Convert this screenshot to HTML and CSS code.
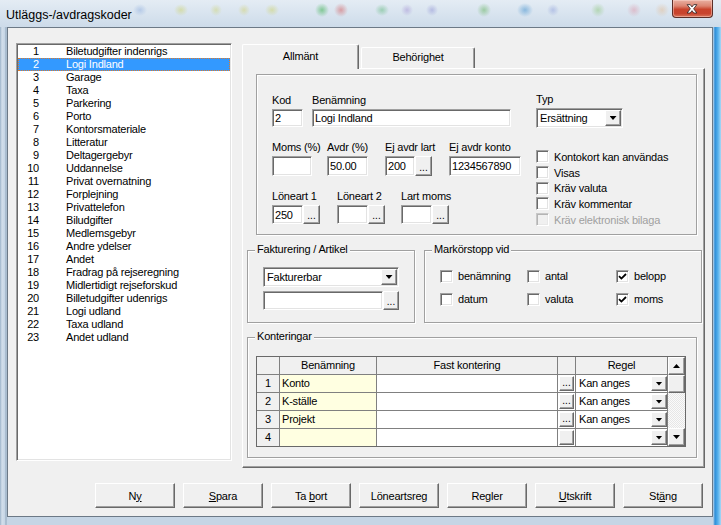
FILE: index.html
```html
<!DOCTYPE html>
<html lang="sv">
<head>
<meta charset="utf-8">
<title>Utläggs-/avdragskoder</title>
<link rel="stylesheet" href="styles.css">
</head>
<body>
<div class="window">
  <div class="titlebar">
    <span class="title">Utläggs-/avdragskoder</span>
    <div class="close">
      <svg width="41" height="18" viewBox="0 0 41 18">
        <path d="M15.5 4.5h3.2l1.8 2.4 1.8-2.4h3.2l-3.3 4.3 3.3 4.3h-3.2l-1.8-2.4-1.8 2.4h-3.2l3.3-4.3z" fill="#fff" stroke="#3a2a2a" stroke-width="0.9" stroke-linejoin="round"/>
      </svg>
    </div>
  </div>
  <div class="client">
    <div class="main">
      <div class="listbox">
        <div class="item"><span class="num">1</span><span class="name">Biletudgifter indenrigs</span></div>
        <div class="item sel"><span class="num">2</span><span class="name">Logi Indland</span></div>
        <div class="item"><span class="num">3</span><span class="name">Garage</span></div>
        <div class="item"><span class="num">4</span><span class="name">Taxa</span></div>
        <div class="item"><span class="num">5</span><span class="name">Parkering</span></div>
        <div class="item"><span class="num">6</span><span class="name">Porto</span></div>
        <div class="item"><span class="num">7</span><span class="name">Kontorsmateriale</span></div>
        <div class="item"><span class="num">8</span><span class="name">Litteratur</span></div>
        <div class="item"><span class="num">9</span><span class="name">Deltagergebyr</span></div>
        <div class="item"><span class="num">10</span><span class="name">Uddannelse</span></div>
        <div class="item"><span class="num">11</span><span class="name">Privat overnatning</span></div>
        <div class="item"><span class="num">12</span><span class="name">Forplejning</span></div>
        <div class="item"><span class="num">13</span><span class="name">Privattelefon</span></div>
        <div class="item"><span class="num">14</span><span class="name">Biludgifter</span></div>
        <div class="item"><span class="num">15</span><span class="name">Medlemsgebyr</span></div>
        <div class="item"><span class="num">16</span><span class="name">Andre ydelser</span></div>
        <div class="item"><span class="num">17</span><span class="name">Andet</span></div>
        <div class="item"><span class="num">18</span><span class="name">Fradrag på rejseregning</span></div>
        <div class="item"><span class="num">19</span><span class="name">Midlertidigt rejseforskud</span></div>
        <div class="item"><span class="num">20</span><span class="name">Billetudgifter udenrigs</span></div>
        <div class="item"><span class="num">21</span><span class="name">Logi udland</span></div>
        <div class="item"><span class="num">22</span><span class="name">Taxa udland</span></div>
        <div class="item"><span class="num">23</span><span class="name">Andet udland</span></div>
      </div>

      <div class="tabs">
        <div class="tabstrip">
          <div class="tab active">Allmänt</div>
          <div class="tab">Behörighet</div>
        </div>
        <div class="panel">
          <div class="top-frame">
            <div class="left-col">
              <div class="row r1">
                <div class="field w-kod"><span class="lbl">Kod</span><div class="input">2</div></div>
                <div class="field w-ben"><span class="lbl">Benämning</span><div class="input">Logi Indland</div></div>
              </div>
              <div class="row r2">
                <div class="field w-moms"><span class="lbl">Moms (%)</span><div class="input"></div></div>
                <div class="field w-avdr"><span class="lbl">Avdr (%)</span><div class="input">50.00</div></div>
                <div class="field w-lart"><span class="lbl">Ej avdr lart</span><div class="combo"><div class="input ci30">200</div><div class="dots">...</div></div></div>
                <div class="field w-konto"><span class="lbl">Ej avdr konto</span><div class="input">1234567890</div></div>
              </div>
              <div class="row r3">
                <div class="field w-lon1"><span class="lbl">Löneart 1</span><div class="combo"><div class="input ci31">250</div><div class="dots">...</div></div></div>
                <div class="field w-lon2"><span class="lbl">Löneart 2</span><div class="combo"><div class="input ci31"></div><div class="dots">...</div></div></div>
                <div class="field w-lart2"><span class="lbl">Lart moms</span><div class="combo"><div class="input ci31"></div><div class="dots">...</div></div></div>
              </div>
            </div>
            <div class="right-col">
              <span class="lbl">Typ</span>
              <div class="select typ"><span class="val">Ersättning</span><span class="drop"><span class="tri"></span></span></div>
              <div class="cblist">
                <div class="cb"><span class="box"></span><span>Kontokort kan användas</span></div>
                <div class="cb"><span class="box"></span><span>Visas</span></div>
                <div class="cb"><span class="box"></span><span>Kräv valuta</span></div>
                <div class="cb"><span class="box"></span><span>Kräv kommentar</span></div>
                <div class="cb disabled"><span class="box"></span><span>Kräv elektronisk bilaga</span></div>
              </div>
            </div>
          </div>

          <div class="mid-row">
            <div class="group fakt">
              <span class="legend">Fakturering / Artikel</span>
              <div class="select fsel"><span class="val">Fakturerbar</span><span class="drop"><span class="tri"></span></span></div>
              <div class="combo frow"><div class="input ci120"></div><div class="dots d16">...</div></div>
            </div>
            <div class="group mark">
              <span class="legend">Markörstopp vid</span>
              <div class="markgrid">
                <div class="cb"><span class="box"></span><span>benämning</span></div>
                <div class="cb"><span class="box"></span><span>antal</span></div>
                <div class="cb"><span class="box"><svg width="9" height="9" viewBox="0 0 9 9"><path d="M1 4.2 L3.4 6.6 L8 2" fill="none" stroke="#000" stroke-width="1.8"/></svg></span><span>belopp</span></div>
                <div class="cb"><span class="box"></span><span>datum</span></div>
                <div class="cb"><span class="box"></span><span>valuta</span></div>
                <div class="cb"><span class="box"><svg width="9" height="9" viewBox="0 0 9 9"><path d="M1 4.2 L3.4 6.6 L8 2" fill="none" stroke="#000" stroke-width="1.8"/></svg></span><span>moms</span></div>
              </div>
            </div>
          </div>

          <div class="group kont">
            <span class="legend">Konteringar</span>
            <div class="kgrid">
              <div class="hd"></div>
              <div class="hd">Benämning</div>
              <div class="hd">Fast kontering</div>
              <div class="hd"></div>
              <div class="hd">Regel</div>
              <div class="vscroll">
                <div class="sbtn"><span class="tri up"></span></div>
                <div class="thumb"></div>
                <div class="track"></div>
                <div class="sbtn"><span class="tri"></span></div>
              </div>

              <div class="rh">1</div>
              <div class="cell yl">Konto</div>
              <div class="cell"></div>
              <div class="cell bc"><div class="dots gb">...</div></div>
              <div class="cell regel"><span class="val">Kan anges</span><span class="gdrop"><span class="tri"></span></span></div>

              <div class="rh">2</div>
              <div class="cell yl">K-ställe</div>
              <div class="cell"></div>
              <div class="cell bc"><div class="dots gb">...</div></div>
              <div class="cell regel"><span class="val">Kan anges</span><span class="gdrop"><span class="tri"></span></span></div>

              <div class="rh">3</div>
              <div class="cell yl">Projekt</div>
              <div class="cell"></div>
              <div class="cell bc"><div class="dots gb">...</div></div>
              <div class="cell regel"><span class="val">Kan anges</span><span class="gdrop"><span class="tri"></span></span></div>

              <div class="rh">4</div>
              <div class="cell yl"></div>
              <div class="cell"></div>
              <div class="cell bc"><div class="dots gb"></div></div>
              <div class="cell regel"><span class="val"></span><span class="gdrop"><span class="tri"></span></span></div>
            </div>
          </div>
        </div>
      </div>
    </div>

    <div class="buttons">
      <div class="btn"><span>N<u>y</u></span></div>
      <div class="btn"><span><u>S</u>para</span></div>
      <div class="btn"><span>Ta <u>b</u>ort</span></div>
      <div class="btn"><span>Löneartsreg</span></div>
      <div class="btn"><span>Regler</span></div>
      <div class="btn"><span><u>U</u>tskrift</span></div>
      <div class="btn"><span>St<u>ä</u>ng</span></div>
    </div>
  </div>
</div>
</body>
</html>
```
FILE: styles.css
```css
* { box-sizing: border-box; }
html, body { margin: 0; padding: 0; }
body {
  width: 721px;
  height: 525px;
  overflow: hidden;
  font-family: "Liberation Sans", Arial, sans-serif;
  font-size: 11px;
  letter-spacing: -0.2px;
  color: #000;
  background: #c3d4e5;
}

.window {
  width: 721px;
  height: 525px;
  display: flex;
  flex-direction: column;
  background:
    linear-gradient(90deg, #9cb3c9 0, #d3dfeb 2px, #c5d5e5 5px, #8fa5ba 6px, #c5d5e5 7px, #c5d5e5 713px, #2e8ed8 715px, #58b2ec 718px, #a9d8f6 721px);
}

/* ---------- title bar ---------- */
.titlebar {
  height: 27px;
  display: flex;
  align-items: flex-start;
  background:
    radial-gradient(7px 6px at 140px 10px, rgba(110,150,215,.35), transparent),
    radial-gradient(7px 6px at 181px 10px, rgba(200,205,70,.40), transparent),
    radial-gradient(6px 6px at 216px 10px, rgba(200,205,70,.35), transparent),
    radial-gradient(6px 6px at 244px 10px, rgba(205,200,60,.35), transparent),
    radial-gradient(7px 6px at 272px 10px, rgba(200,205,70,.40), transparent),
    radial-gradient(7px 7px at 322px 10px, rgba(40,170,60,.50), transparent),
    radial-gradient(7px 7px at 341px 10px, rgba(210,70,70,.45), transparent),
    radial-gradient(7px 6px at 382px 10px, rgba(60,170,90,.40), transparent),
    radial-gradient(6px 6px at 407px 10px, rgba(140,110,200,.35), transparent),
    radial-gradient(6px 6px at 432px 10px, rgba(110,110,200,.35), transparent),
    radial-gradient(7px 7px at 484px 10px, rgba(80,170,70,.45), transparent),
    radial-gradient(8px 7px at 525px 10px, rgba(40,130,200,.45), transparent),
    radial-gradient(6px 6px at 553px 10px, rgba(110,130,210,.35), transparent),
    radial-gradient(7px 7px at 598px 10px, rgba(120,190,90,.40), transparent),
    radial-gradient(7px 7px at 634px 10px, rgba(220,130,150,.40), transparent),
    radial-gradient(7px 7px at 662px 10px, rgba(230,170,110,.35), transparent),
    linear-gradient(#e4ecf4, #d6e2ee 60%, #cddbe9);
}
.title {
  margin: 7px 0 0 6px;
  line-height: 16px;
  font-size: 12.5px;
  letter-spacing: 0;
  color: #000;
}
.close {
  margin-left: auto;
  margin-right: 8px;
  width: 41px;
  height: 18px;
  border: 1px solid #5b2e28;
  border-top: none;
  border-radius: 0 0 4px 4px;
  background: linear-gradient(#e9b0a2 0, #dc8572 35%, #c9432c 55%, #c8442e 80%, #d9765c 100%);
  box-shadow: inset 0 0 0 1px rgba(255,220,210,.45);
  display: flex;
}
.close svg { display: block; margin-left: -1px; }

/* ---------- client ---------- */
.client {
  flex: 1;
  margin: 0 8px 8px 7px;
  background: #f0f0f0;
  border: 1px solid #6c7986;
  display: flex;
  flex-direction: column;
}
.main {
  display: flex;
  align-items: flex-start;
  padding: 15px 0 0 8px;
}

/* sunken field */
.listbox, .input, .select {
  background: #fff;
  border: 1px solid;
  border-color: #a0a0a0 #fff #fff #a0a0a0;
  box-shadow: inset 1px 1px 0 #696969, inset -1px -1px 0 #e3e3e3;
}

/* ---------- list ---------- */
.listbox {
  width: 216px;
  height: 418px;
  padding: 1px;
}
.item {
  display: flex;
  height: 13px;
  line-height: 13px;
  white-space: nowrap;
}
.item .num { width: 21px; text-align: right; }
.item .name { margin-left: 27px; }
.item.sel {
  background: #3399ff;
  color: #fff;
  outline: 1px dotted #e07a28;
  outline-offset: -1px;
}

/* ---------- tabs ---------- */
.tabs {
  margin: 1px 0 0 10px;
  width: 463px;
  display: flex;
  flex-direction: column;
}
.tabstrip {
  display: flex;
  align-items: flex-end;
  height: 24px;
  position: relative;
  z-index: 1;
}
.tab {
  height: 21px;
  width: 114px;
  margin-left: 2px;
  padding-top: 3px;
  text-align: center;
  line-height: 13px;
  background: #f0f0f0;
  border: 1px solid;
  border-color: #fff #696969 transparent #fff;
  border-bottom: none;
  box-shadow: inset -1px 0 0 #a0a0a0;
  border-radius: 2px 2px 0 0;
}
.tab.active {
  width: 117px;
  height: 25px;
  margin-left: 0;
  margin-bottom: -1px;
  padding-top: 5px;
}
.panel {
  height: 400px;
  background: #f0f0f0;
  border: 1px solid;
  border-color: #fff #696969 #696969 #fff;
  box-shadow: inset -1px -1px 0 #a0a0a0;
  display: flex;
  flex-direction: column;
}

/* etched frames */
.top-frame, .group {
  border: 1px solid #a0a0a0;
  box-shadow: inset 1px 1px 0 #fff, 1px 1px 0 #fff;
}
.top-frame {
  margin: 5px 0 0 13px;
  width: 441px;
  height: 161px;
  display: flex;
}
.left-col {
  width: 279px;
  padding: 19px 0 0 15px;
}
.row { display: flex; }
.row.r2 { margin-top: 14px; }
.row.r3 { margin-top: 14px; }
.field {
  display: flex;
  flex-direction: column;
  white-space: nowrap;
}
.lbl {
  display: block;
  height: 13px;
  line-height: 13px;
  margin-bottom: 2px;
  white-space: nowrap;
}
.input {
  display: flex;
  align-items: center;
  padding-left: 2px;
  white-space: nowrap;
  overflow: hidden;
}
.r1 .input { height: 18px; }
.r2 .input { height: 20px; }
.r3 .input { height: 19px; }

.w-kod { width: 31px; }
.w-ben { width: 199px; margin-left: 9px; }
.w-moms { width: 40px; }
.w-avdr { width: 41px; margin-left: 15px; }
.w-lart { width: 47px; margin-left: 17px; }
.w-konto { width: 72px; margin-left: 17px; }
.w-lon1 { width: 48px; }
.w-lon2 { width: 48px; margin-left: 17px; }
.w-lart2 { width: 48px; margin-left: 16px; }

.combo { display: flex; }
.ci30 { width: 30px; }
.ci31 { width: 31px; }
.ci120 { width: 120px; height: 19px; }

/* raised */
.dots, .drop, .gdrop, .btn, .sbtn, .thumb {
  background: #f0f0f0;
  border: 1px solid;
  border-color: #fff #696969 #696969 #fff;
  box-shadow: inset -1px -1px 0 #a0a0a0;
}
.dots {
  width: 17px;
  display: flex;
  align-items: flex-end;
  justify-content: center;
  line-height: 11px;
  padding-bottom: 2px;
  font-size: 10px;
  letter-spacing: 0;
}
.dots.d16 { width: 16px; }

/* ---------- right column ---------- */
.right-col {
  padding-top: 18px;
  display: flex;
  flex-direction: column;
  align-items: flex-start;
}
.select {
  display: flex;
  align-items: stretch;
  padding: 1px;
}
.select .val {
  flex: 1;
  display: flex;
  align-items: center;
  padding-left: 2px;
  white-space: nowrap;
}
.select .drop {
  width: 16px;
  display: flex;
  align-items: center;
  justify-content: center;
}
.typ { width: 87px; height: 20px; }
.tri {
  display: block;
  width: 7px;
  height: 4px;
  background: #000;
  clip-path: polygon(0 0, 100% 0, 50% 100%);
}
.tri.up { clip-path: polygon(50% 0, 100% 100%, 0 100%); }

.cblist { margin-top: 21px; }
.cb {
  display: flex;
  align-items: center;
  height: 15.7px;
  white-space: nowrap;
}
.box {
  width: 13px;
  height: 13px;
  flex: none;
  margin-right: 5px;
  background: #fff;
  border: 1px solid;
  border-color: #a0a0a0 #fff #fff #a0a0a0;
  box-shadow: inset 1px 1px 0 #696969, inset -1px -1px 0 #e3e3e3;
  display: flex;
  align-items: center;
  justify-content: center;
}
.box svg { display: block; }
.cb.disabled { color: #a0a0a0; }
.cb.disabled .box {
  background: #f0f0f0;
  border-color: #c8c8c8 #fff #fff #c8c8c8;
  box-shadow: inset 1px 1px 0 #b4b4b4, inset -1px -1px 0 #e8e8e8;
}

/* ---------- groups ---------- */
.mid-row {
  display: flex;
  margin: 15px 0 0 4px;
}
.group { position: relative; }
.legend {
  position: absolute;
  top: -8px;
  left: 7px;
  padding: 0 2px;
  line-height: 13px;
  background: #f0f0f0;
  white-space: nowrap;
}
.fakt {
  width: 168px;
  height: 73px;
  padding: 16px 0 0 15px;
}
.fsel { width: 136px; height: 20px; }
.frow { margin-top: 4px; }
.mark {
  width: 278px;
  height: 73px;
  margin-left: 9px;
  padding: 17px 0 0 15px;
}
.markgrid {
  display: grid;
  grid-template-columns: 87px 89px auto;
  grid-auto-rows: 16px;
  row-gap: 7px;
}
.markgrid .cb { height: 16px; }

.kont {
  width: 450px;
  height: 121px;
  margin: 14px 0 0 4px;
  padding: 18px 0 0 8px;
}

/* ---------- grid ---------- */
.kgrid {
  display: grid;
  grid-template-columns: 22px 96px 180px 17px 91px 17px;
  grid-template-rows: repeat(5, 17px);
  gap: 1px;
  width: 430px;
  background: #808080;
  border: 1px solid #696969;
}
.hd, .rh {
  background: #f0f0f0;
  text-align: center;
  line-height: 17px;
  white-space: nowrap;
}
.cell {
  background: #fff;
  line-height: 17px;
  padding-left: 2px;
  white-space: nowrap;
  overflow: hidden;
}
.cell.yl { background: #ffffe1; }
.cell.bc {
  padding: 1px 1px 1px 1px;
  display: flex;
}
.dots.gb { width: 15px; height: 15px; }
.cell.regel {
  display: flex;
  padding: 1px 0 1px 3px;
}
.cell.regel .val {
  flex: 1;
  line-height: 15px;
}
.gdrop {
  width: 16px;
  display: flex;
  align-items: center;
  justify-content: center;
}
.vscroll {
  grid-column: 6;
  grid-row: 1 / 6;
  display: flex;
  flex-direction: column;
  background: #f0f0f0;
}
.sbtn {
  height: 18px;
  display: flex;
  align-items: center;
  justify-content: center;
}
.thumb { height: 18px; }
.track {
  flex: 1;
  background: repeating-conic-gradient(#e6e6e6 0 25%, #fafafa 0 50%) 0 0 / 2px 2px;
}

/* ---------- bottom buttons ---------- */
.buttons {
  display: flex;
  justify-content: flex-end;
  gap: 8px;
  padding-right: 9px;
  margin-top: 15px;
}
.btn {
  width: 80px;
  height: 25px;
  display: flex;
  align-items: center;
  justify-content: center;
  white-space: nowrap;
}
.btn u { text-decoration: underline; text-underline-offset: 1px; }
```
